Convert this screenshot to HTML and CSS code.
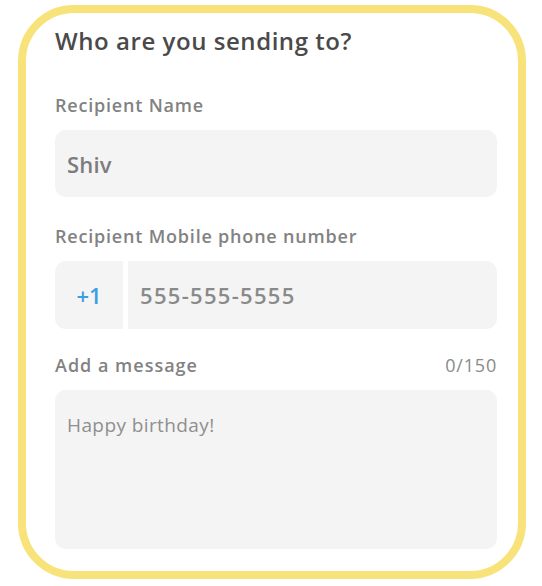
FILE: index.html
```html
<!DOCTYPE html>
<html lang="en">
<head>
<meta charset="utf-8">
<title>Who are you sending to?</title>
<link rel="stylesheet" href="styles.css">
</head>
<body>
<div class="card">
  <h1 class="title">Who are you sending to?</h1>

  <div class="label label-name">Recipient Name</div>
  <div class="field field-name">Shiv</div>

  <div class="label label-phone">Recipient Mobile phone number</div>
  <div class="phone-row">
    <div class="field code">+1</div>
    <div class="field phone">555-555-5555</div>
  </div>

  <div class="label-row">
    <div class="label label-msg">Add a message</div>
    <div class="counter">0/150</div>
  </div>
  <div class="field message">Happy birthday!</div>
</div>
</body>
</html>
```

FILE: styles.css
```css
html, body {
  margin: 0;
  padding: 0;
  background: #ffffff;
}

body {
  font-family: "Open Sans", Lato, "Liberation Sans", sans-serif;
  width: 542px;
  height: 586px;
}

.card {
  box-sizing: border-box;
  width: 508px;
  height: 574px;
  margin: 5px 0 0 18px;
  border: 8px solid #f8e27a;
  border-radius: 56px;
  padding: 13px 21px 0 29px;
  display: flex;
  flex-direction: column;
}

.title {
  margin: 0;
  font-size: 24px;
  line-height: 29px;
  font-weight: 600;
  letter-spacing: 0.55px;
  color: #4a4a4a;
}

.label {
  font-size: 18px;
  line-height: 22px;
  font-weight: 600;
  letter-spacing: 0.8px;
  color: #828282;
}

.label-msg {
  letter-spacing: 1px;
}

.label-name {
  margin-top: 39px;
}

.label-phone {
  margin-top: 28px;
}

.field {
  box-sizing: border-box;
  background: #f4f4f4;
  border-radius: 11px;
  display: flex;
  align-items: center;
  padding: 0 12px;
  font-size: 22px;
  font-weight: 600;
  color: #7c7c7c;
}

.field-name {
  margin-top: 14px;
  height: 67px;
  letter-spacing: 0.2px;
}

.phone-row {
  margin-top: 14px;
  height: 68px;
  display: flex;
  gap: 5px;
}

.phone-row .field {
  height: 100%;
}

.code {
  width: 68px;
  justify-content: center;
  color: #3a9ee0;
  border-radius: 11px 0 0 11px;
}

.phone {
  flex: 1;
  color: #8a8a8a;
  letter-spacing: 1.3px;
  border-radius: 0 11px 11px 0;
}

.label-row {
  margin-top: 25px;
  display: flex;
  justify-content: space-between;
  align-items: baseline;
}

.counter {
  font-size: 18px;
  line-height: 22px;
  font-weight: 400;
  letter-spacing: 0.8px;
  color: #8a8a8a;
}

.message {
  margin-top: 14px;
  height: 159px;
  align-items: flex-start;
  padding-top: 22px;
  font-size: 19px;
  font-weight: 400;
  letter-spacing: 0.4px;
  color: #8f8f8f;
}
```
